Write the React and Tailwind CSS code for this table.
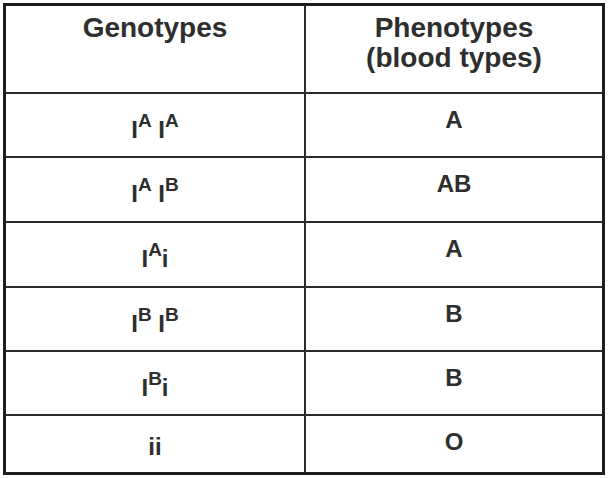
const rows = [
  { geno: [["I", "A"], " ", ["I", "A"]], pheno: "A", h: "h-[64px]" },
  { geno: [["I", "A"], " ", ["I", "B"]], pheno: "AB", h: "h-[65px]" },
  { geno: [["I", "A"], "i"], pheno: "A", h: "h-[65px]" },
  { geno: [["I", "B"], " ", ["I", "B"]], pheno: "B", h: "h-[64px]" },
  { geno: [["I", "B"], "i"], pheno: "B", h: "h-[64px]" },
  { geno: ["ii"], pheno: "O", h: "h-[56px]", last: true },
];

const Allele = ({ part }) => {
  if (typeof part === "string") return <span>{part}</span>;
  return (
    <span>
      {part[0]}
      <span className="relative -top-[11px] text-[19px]">{part[1]}</span>
    </span>
  );
};

export default function App() {
  return (
    <main className="w-[611px] h-[478px] bg-white pt-[3px] pl-[3px] font-['Liberation_Sans',Arial,sans-serif] font-bold text-[#2e2e2e]">
      <div className="w-[602px] h-[472px] border-[3px] border-[#1e1e1e] flex flex-col">
        <div className="flex h-[88px] border-b-2 border-[#2a2a2a] text-[28px] leading-[30px] text-center">
          <div className="w-[300px] border-r-2 border-[#2a2a2a] pt-[7px]">Genotypes</div>
          <div className="flex-1 pt-[7px]">
            Phenotypes
            <br />
            (blood types)
          </div>
        </div>
        {rows.map((row, i) => (
          <div
            key={i}
            className={`flex ${row.h} ${row.last ? "" : "border-b-2 border-[#2a2a2a]"} text-[24px] leading-[24px] text-center`}
          >
            <div
              className={`w-[300px] border-r-2 border-[#2a2a2a] ${row.last ? "pt-[19px]" : "pt-[24px]"}`}
            >
              {row.geno.map((p, j) => (
                <Allele key={j} part={p} />
              ))}
            </div>
            <div className="flex-1 pt-[14px]">{row.pheno}</div>
          </div>
        ))}
      </div>
    </main>
  );
}
